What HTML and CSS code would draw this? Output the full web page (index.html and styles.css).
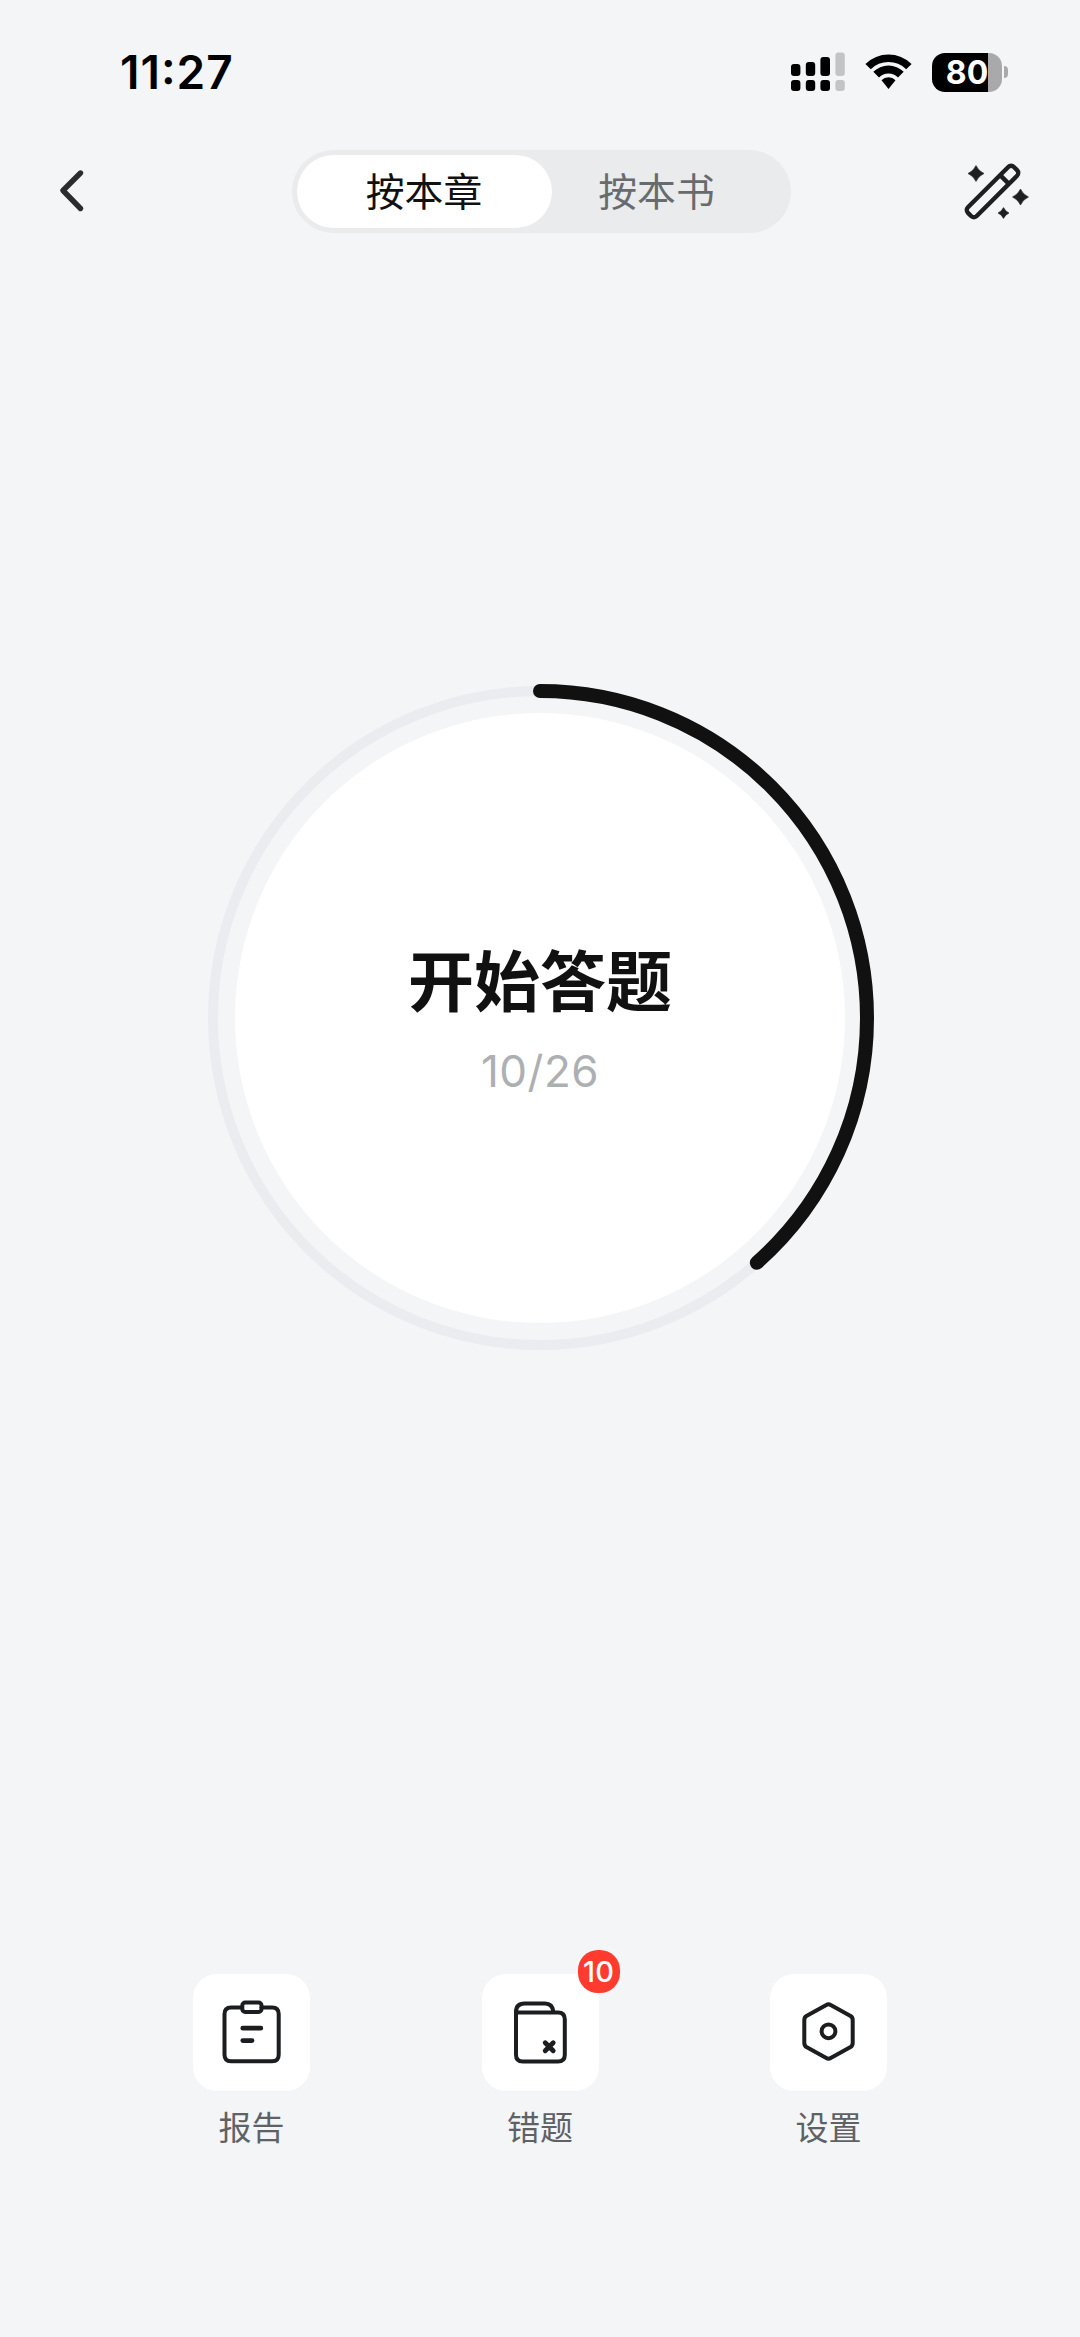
FILE: index.html
```
<!DOCTYPE html>
<html lang="zh-CN">
<head>
  <meta charset="UTF-8">
  <title>开始答题</title>
  <meta name="viewport" content="width=device-width, initial-scale=1.0">
  <link rel="stylesheet" href="styles.css">
</head>
<body>
  <!-- Status bar -->
  <div class="status-bar">
    <div class="time">11:27</div>
    <div class="status-icons">
      <svg class="signal" width="54" height="40" viewBox="0 0 54 40">
        <rect x="0" y="12" width="9.4" height="12" rx="3"/>
        <rect x="14.8" y="10" width="9.4" height="14" rx="3"/>
        <rect x="29.4" y="5" width="9.6" height="19" rx="3"/>
        <rect class="off" x="44.4" y="0.5" width="9.4" height="23.5" rx="3"/>
        <rect x="0" y="28" width="9.4" height="11" rx="3"/>
        <rect x="14.8" y="28" width="9.4" height="11" rx="3"/>
        <rect x="29.4" y="28" width="9.6" height="11" rx="3"/>
        <rect class="off" x="44.4" y="28" width="9.4" height="11" rx="3"/>
      </svg>
      <svg class="wifi" width="47" height="36" viewBox="0 0 47 36">
        <path d="M0.4 9.9 A33 33 0 0 1 46.6 9.9 L41.2 15.3 A25 25 0 0 0 5.8 15.3 Z"/>
        <path d="M8.3 17.8 A21.5 21.5 0 0 1 38.7 17.8 L33 23.5 A13.5 13.5 0 0 0 14 23.5 Z"/>
        <path d="M16.5 26.3 A9.8 9.8 0 0 1 30.5 26.3 L23.5 35 Z"/>
      </svg>
      <div class="battery"><span>80</span></div>
      <div class="battery-cap"></div>
    </div>
  </div>

  <!-- Top nav -->
  <div class="nav">
    <svg class="back" width="30" height="50" viewBox="0 0 30 50">
      <path d="M22.5 7 L5 24.5 L22.5 42.5"/>
    </svg>
    <div class="tabs">
      <div class="tab active">按本章</div>
      <div class="tab">按本书</div>
    </div>
    <svg class="wand" width="66" height="60" viewBox="22 21 66 60">
      <g class="wand-body" transform="rotate(-45 51.5 51.5)">
        <rect x="19" y="45.3" width="65" height="12.4" rx="4"/>
        <path d="M68.5 45.3 V57.7"/>
      </g>
      <path d="M35 25.5 Q37.5 31 43 33.5 Q37.5 36 35 41.5 Q32.5 36 27 33.5 Q32.5 31 35 25.5 Z"/>
      <path d="M79.5 49 Q82 54.5 87.5 57 Q82 59.5 79.5 65 Q77 59.5 71.5 57 Q77 54.5 79.5 49 Z"/>
      <path d="M62.5 67.6 Q64.2 71.3 68 73 Q64.2 74.7 62.5 78.4 Q60.8 74.7 57 73 Q60.8 71.3 62.5 67.6 Z"/>
    </svg>
  </div>

  <!-- Progress ring, 10 of 26 answered -->
  <div class="ring">
    <svg class="ring-svg" width="668" height="668" viewBox="0 0 668 668">
      <circle class="track" cx="334" cy="334" r="327"/>
      <circle class="progress" cx="334" cy="334" r="327" pathLength="26" stroke-dasharray="10 26" transform="rotate(-90 334 334)"/>
    </svg>
    <div class="start">
      <div class="start-title">开始答题</div>
      <div class="start-count">10/26</div>
    </div>
  </div>

  <!-- Bottom actions -->
  <div class="actions">
    <div class="action">
      <div class="tile">
        <svg width="117" height="117" viewBox="0 0 117 117">
          <path d="M49 33.5 H38 Q31.5 33.5 31.5 40 V80.8 Q31.5 87.3 38 87.3 H79.2 Q85.7 87.3 85.7 80.8 V40 Q85.7 33.5 79.2 33.5 H68.5"/>
          <rect x="49.3" y="28.6" width="19.2" height="9.4" rx="3"/>
          <path class="thick" d="M49.8 54.2 H67.8 M49.8 66.6 H59"/>
        </svg>
      </div>
      <div class="label">报告</div>
    </div>
    <div class="action">
      <div class="tile">
        <svg width="117" height="117" viewBox="0 0 117 117">
          <path d="M34 38.4 H76 Q82.8 38.4 82.8 45.2 V80.8 Q82.8 87.6 76 87.6 H40.8 Q34 87.6 34 80.8 V38 Q34 29.5 42.5 29.5 H63 Q70.5 29.5 71.5 38"/>
          <path class="thick" d="M63.2 68.7 L71.2 76.7 M71.2 68.7 L63.2 76.7"/>
        </svg>
        <div class="badge">10</div>
      </div>
      <div class="label">错题</div>
    </div>
    <div class="action">
      <div class="tile">
        <svg width="117" height="117" viewBox="0 0 117 117">
          <path d="M56.3 31 Q58.5 29.5 60.7 31 L80.6 42 Q82.7 43.3 82.7 46 V69 Q82.7 71.7 80.6 73 L60.7 84 Q58.5 85.5 56.3 84 L36.4 73 Q34.3 71.7 34.3 69 V46 Q34.3 43.3 36.4 42 Z"/>
          <circle cx="58.5" cy="57.3" r="6.9"/>
        </svg>
      </div>
      <div class="label">设置</div>
    </div>
  </div>
</body>
</html>
```
FILE: styles.css
```
* {
  box-sizing: border-box;
}
body {
  margin: 0;
  height: 2337px;
  background: #f3f5f7;
  color: #111;
  font-family: Inter, "Noto Sans CJK SC", sans-serif;
  display: flex;
  flex-direction: column;
  overflow: hidden;
}
svg {
  display: block;
  flex: none;
}

/* status bar */
.status-bar {
  height: 144px;
  padding: 0 72px 0 120px;
  display: flex;
  justify-content: space-between;
  align-items: center;
  color: #000;
}
.time {
  font-size: 46px;
  font-weight: 600;
  letter-spacing: 1px;
  font-feature-settings: "case";
}
.status-icons {
  display: flex;
  align-items: center;
}
.off {
  fill: #c3c4c6;
}
.wifi {
  margin-left: 20px;
}
.battery {
  width: 70px;
  height: 39px;
  margin-left: 20px;
  padding-left: 11px;
  border-radius: 13px;
  background: linear-gradient(to right, #000 56px, #a9a9ab 56px);
  color: #fff;
  font-size: 32px;
  font-weight: 700;
  line-height: 39px;
  text-align: center;
}
.battery span {
  display: block;
  width: 48px;
}
.battery-cap {
  width: 4px;
  height: 12px;
  margin-left: 2px;
  border-radius: 0 4px 4px 0;
  background: #a9a9ab;
}

/* nav */
.nav {
  height: 94px;
  padding: 0 51px 0 58px;
  display: flex;
  justify-content: space-between;
  align-items: center;
}
.back {
  fill: none;
  stroke: #2b2c2e;
  stroke-width: 5.4;
  stroke-linecap: round;
  stroke-linejoin: round;
}
.tabs {
  width: 499px;
  height: 83px;
  margin-left: 31px;
  padding: 5px;
  border-radius: 42px;
  background: #eaebed;
  display: flex;
}
.tab {
  width: 255px;
  height: 73px;
  border-radius: 37px;
  font-size: 38.8px;
  line-height: 73px;
  text-align: center;
  color: #686b6e;
}
.tab + .tab {
  width: 210px;
}
.tab.active {
  background: #fff;
  color: #111;
}
.wand {
  fill: #1e1f21;
  stroke: #1e1f21;
  stroke-width: 0.6;
  stroke-linejoin: round;
}
.wand-body {
  fill: none;
  stroke-width: 4.4;
}

/* ring */
.ring {
  width: 668px;
  height: 668px;
  margin: 446px auto 0;
  display: grid;
  place-items: center;
}
.ring-svg,
.start {
  grid-area: 1 / 1;
}
.track {
  fill: none;
  stroke: #ebecef;
  stroke-width: 10;
}
.progress {
  fill: none;
  stroke: #111;
  stroke-width: 14;
  stroke-linecap: round;
}
.start {
  width: 610px;
  height: 610px;
  border-radius: 50%;
  background: #fff;
  display: flex;
  flex-direction: column;
  align-items: center;
}
.start-title {
  margin-top: 219px;
  font-size: 66px;
  font-weight: 700;
  line-height: 100px;
}
.start-count {
  margin-top: 9px;
  color: #adb0b2;
  font-size: 44px;
  letter-spacing: 0.5px;
  line-height: 60px;
}

/* bottom actions */
.actions {
  margin-top: 622px;
  display: flex;
  justify-content: center;
  gap: 171.5px;
}
.action {
  width: 117px;
}
.tile {
  position: relative;
  width: 117px;
  height: 117px;
  border-radius: 24px;
  background: #fff;
}
.tile svg {
  fill: none;
  stroke: #1c1d1f;
  stroke-width: 4;
  stroke-linecap: round;
  stroke-linejoin: round;
}
.tile .thick {
  stroke-width: 4.8;
}
.label {
  margin-top: 12px;
  color: #5f6265;
  font-size: 33px;
  line-height: 50px;
  text-align: center;
}
.badge {
  position: absolute;
  top: -24px;
  right: -21px;
  width: 42px;
  height: 43px;
  border-radius: 20px;
  background: #ff3b30;
  color: #fff;
  font-size: 29px;
  font-weight: 500;
  line-height: 43px;
  text-align: center;
}
```
